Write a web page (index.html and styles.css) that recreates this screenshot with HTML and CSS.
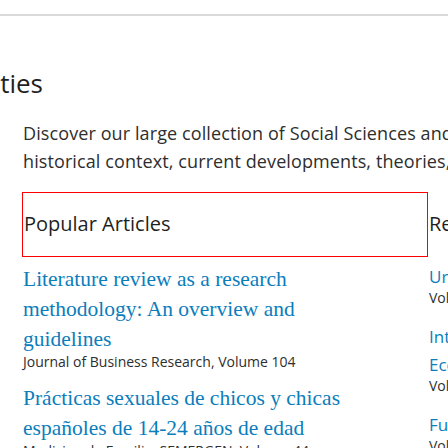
FILE: index.html
```html
<!DOCTYPE html>
<html lang="en">
<head>
<meta charset="utf-8">
<title>Social Sciences and Humanities</title>
<link rel="stylesheet" href="styles.css">
</head>
<body>
<div class="topbar"></div>
<main class="page">
  <div class="title-wrap"><h1 class="title">Social Sciences and Humanities</h1></div>
  <p class="intro">Discover our large collection of Social Sciences and Humanities books and journals, exploring the<br>historical context, current developments, theories, and practical applications across disciplines.</p>
  <div class="columns">
    <section class="col">
      <h2 class="col-head col-head--boxed">Popular Articles</h2>
      <ul class="articles">
        <li class="article">
          <a class="article-title" href="#">Literature review as a research methodology: An overview and guidelines</a>
          <div class="article-meta">Journal of Business Research, Volume 104</div>
        </li>
        <li class="article">
          <a class="article-title" href="#">Prácticas sexuales de chicos y chicas españoles de 14-24 años de edad</a>
          <div class="article-meta">Medicina de Familia. SEMERGEN, Volume 44</div>
        </li>
      </ul>
    </section>
    <section class="col col--recent">
      <h2 class="col-head">Recent Articles</h2>
      <ul class="recent">
        <li class="recent-item">
          <a class="recent-title" href="#">Urban governance and the politics of everyday life</a>
          <div class="recent-meta">Volume 12</div>
        </li>
        <li class="recent-item">
          <a class="recent-title" href="#">Intergenerational mobility and<br>Economic inequality in Europe</a>
          <div class="recent-meta">Volume 58</div>
        </li>
        <li class="recent-item">
          <a class="recent-title" href="#">Future of work in the digital age</a>
          <div class="recent-meta">Volume 31</div>
        </li>
      </ul>
    </section>
  </div>
</main>
</body>
</html>
```

FILE: styles.css
```css
html, body {
  margin: 0;
  padding: 0;
  background: #ffffff;
  overflow: hidden;
}

body {
  width: 448px;
  height: 448px;
  font-family: "Open Sans", "Liberation Sans", sans-serif;
  color: #1f1f1f;
}

.topbar {
  height: 14px;
  border-bottom: 2px solid #dadada;
}

.page {
  width: 900px;
  padding-left: 22px;
}

.title-wrap {
  display: flex;
  justify-content: flex-end;
  width: 21px;
  margin-top: 47px;
  white-space: nowrap;
}

.title {
  margin: 0;
  font-size: 26px;
  line-height: 40px;
  font-weight: 400;
  color: #1f1f1f;
}

.intro {
  margin: 16px 0 0 1px;
  font-size: 18px;
  line-height: 28px;
  letter-spacing: 0.1px;
  color: #2e2e2e;
  white-space: nowrap;
}

.columns {
  display: grid;
  grid-template-columns: 406px 406px;
  margin-top: 17px;
}

.col-head {
  margin: 0;
  font-size: 20px;
  line-height: 30px;
  font-weight: 400;
  color: #1f1f1f;
  padding: 17px 0 17px 1px;
}

.col-head--boxed {
  border: 1px solid #ff0000;
  padding: 16px 0 17px 1px;
}

.articles, .recent {
  list-style: none;
  margin: 0;
  padding: 0;
}

.articles {
  margin-top: 7px;
  padding-left: 1px;
}

.article + .article {
  margin-top: 13px;
}

.article-title {
  display: block;
  max-width: 360px;
  font-family: "Liberation Serif", "DejaVu Serif", serif;
  font-size: 21.5px;
  line-height: 30px;
  color: #0c7dbb;
  text-decoration: none;
}

.article-meta {
  font-size: 14px;
  line-height: 16px;
  color: #2e2e2e;
}

.recent {
  margin-top: 7px;
  padding-left: 1px;
}

.recent-item + .recent-item {
  margin-top: 18px;
}

.recent-title {
  display: block;
  font-size: 17px;
  line-height: 28px;
  color: #0c7dbb;
  text-decoration: none;
  white-space: nowrap;
}

.recent-meta {
  font-size: 14px;
  line-height: 14px;
  color: #2e2e2e;
}
```
